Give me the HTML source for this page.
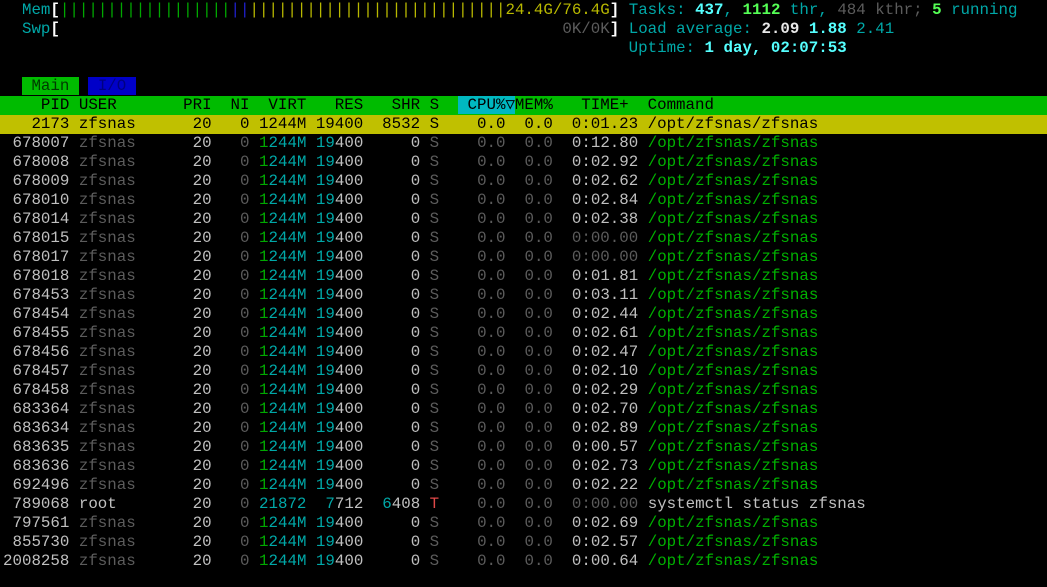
<!DOCTYPE html>
<html><head><meta charset="utf-8"><style>
html,body{margin:0;padding:0;background:#000;width:1047px;height:587px;overflow:hidden}
#t{position:absolute;left:0;top:1px;width:1047px;font-family:"Liberation Mono","DejaVu Sans Mono",monospace;font-size:15.8px;line-height:19px;color:#c0c0c0}
.l{height:19px;padding-left:3px;white-space:pre}
.w{color:#c0c0c0}.d{color:#5c5c5c}.c{color:#00a8a8}.g{color:#00a800}.gr{color:#00b000}
.y{color:#b8b800}.b{color:#2020d0}.r{color:#e04848}
.bc{color:#55ffff;font-weight:bold}.bg{color:#55ff55;font-weight:bold}.bw{color:#e8e8e8;font-weight:bold}.bb{color:#fff;font-weight:bold}
.hdr{background:#00bb00;color:#000}
.sel{background:#c0c000;color:#000}
.cy{background:#00b8c0}
.tri{display:inline-block;width:1ch;text-align:center}
.tm{background:#00bb00;color:#003a00}.ti{background:#0000c8;color:#000080}
</style></head><body><div id="t">
<div class="l">  <span class="c">Mem</span><span class="bb">[</span><span class="g">||||||||||||||||||</span><span class="b">||</span><span class="y">|||||||||||||||||||||||||||24.4G/76.4G</span><span class="bb">]</span> <span class="c">Tasks: </span><span class="bc">437</span><span class="c">, </span><span class="bg">1112</span><span class="c"> thr, </span><span class="d">484 kthr; </span><span class="bg">5</span><span class="c"> running</span></div>
<div class="l">  <span class="c">Swp</span><span class="bb">[</span>                                                     <span class="d">0K/0K</span><span class="bb">]</span> <span class="c">Load average: </span><span class="bw">2.09 </span><span class="bc">1.88 </span><span class="c">2.41</span></div>
<div class="l">                                                                  <span class="c">Uptime: </span><span class="bc">1 day, 02:07:53</span></div>
<div class="l"> </div>
<div class="l">  <span class="tm"> Main </span> <span class="ti"> I/O </span></div>
<div class="l hdr">    PID USER       PRI  NI  VIRT   RES   SHR S  <span class="cy"> CPU%<span class="tri">▽</span></span>MEM%   TIME+  Command</div>
<div class="l sel">   2173 zfsnas      20   0 1244M 19400  8532 S    0.0  0.0  0:01.23 /opt/zfsnas/zfsnas</div>
<div class="l"> 678007 <span class="d">zfsnas</span>     <span class="w"> 20</span> <span class="d">  0</span> <span class="g">1</span><span class="c">244M</span> <span class="c">19</span>400     0 <span class="d">S    0.0  0.0</span>  0:12.80 <span class="gr">/opt/zfsnas/zfsnas</span></div>
<div class="l"> 678008 <span class="d">zfsnas</span>     <span class="w"> 20</span> <span class="d">  0</span> <span class="g">1</span><span class="c">244M</span> <span class="c">19</span>400     0 <span class="d">S    0.0  0.0</span>  0:02.92 <span class="gr">/opt/zfsnas/zfsnas</span></div>
<div class="l"> 678009 <span class="d">zfsnas</span>     <span class="w"> 20</span> <span class="d">  0</span> <span class="g">1</span><span class="c">244M</span> <span class="c">19</span>400     0 <span class="d">S    0.0  0.0</span>  0:02.62 <span class="gr">/opt/zfsnas/zfsnas</span></div>
<div class="l"> 678010 <span class="d">zfsnas</span>     <span class="w"> 20</span> <span class="d">  0</span> <span class="g">1</span><span class="c">244M</span> <span class="c">19</span>400     0 <span class="d">S    0.0  0.0</span>  0:02.84 <span class="gr">/opt/zfsnas/zfsnas</span></div>
<div class="l"> 678014 <span class="d">zfsnas</span>     <span class="w"> 20</span> <span class="d">  0</span> <span class="g">1</span><span class="c">244M</span> <span class="c">19</span>400     0 <span class="d">S    0.0  0.0</span>  0:02.38 <span class="gr">/opt/zfsnas/zfsnas</span></div>
<div class="l"> 678015 <span class="d">zfsnas</span>     <span class="w"> 20</span> <span class="d">  0</span> <span class="g">1</span><span class="c">244M</span> <span class="c">19</span>400     0 <span class="d">S    0.0  0.0  0:00.00</span> <span class="gr">/opt/zfsnas/zfsnas</span></div>
<div class="l"> 678017 <span class="d">zfsnas</span>     <span class="w"> 20</span> <span class="d">  0</span> <span class="g">1</span><span class="c">244M</span> <span class="c">19</span>400     0 <span class="d">S    0.0  0.0  0:00.00</span> <span class="gr">/opt/zfsnas/zfsnas</span></div>
<div class="l"> 678018 <span class="d">zfsnas</span>     <span class="w"> 20</span> <span class="d">  0</span> <span class="g">1</span><span class="c">244M</span> <span class="c">19</span>400     0 <span class="d">S    0.0  0.0</span>  0:01.81 <span class="gr">/opt/zfsnas/zfsnas</span></div>
<div class="l"> 678453 <span class="d">zfsnas</span>     <span class="w"> 20</span> <span class="d">  0</span> <span class="g">1</span><span class="c">244M</span> <span class="c">19</span>400     0 <span class="d">S    0.0  0.0</span>  0:03.11 <span class="gr">/opt/zfsnas/zfsnas</span></div>
<div class="l"> 678454 <span class="d">zfsnas</span>     <span class="w"> 20</span> <span class="d">  0</span> <span class="g">1</span><span class="c">244M</span> <span class="c">19</span>400     0 <span class="d">S    0.0  0.0</span>  0:02.44 <span class="gr">/opt/zfsnas/zfsnas</span></div>
<div class="l"> 678455 <span class="d">zfsnas</span>     <span class="w"> 20</span> <span class="d">  0</span> <span class="g">1</span><span class="c">244M</span> <span class="c">19</span>400     0 <span class="d">S    0.0  0.0</span>  0:02.61 <span class="gr">/opt/zfsnas/zfsnas</span></div>
<div class="l"> 678456 <span class="d">zfsnas</span>     <span class="w"> 20</span> <span class="d">  0</span> <span class="g">1</span><span class="c">244M</span> <span class="c">19</span>400     0 <span class="d">S    0.0  0.0</span>  0:02.47 <span class="gr">/opt/zfsnas/zfsnas</span></div>
<div class="l"> 678457 <span class="d">zfsnas</span>     <span class="w"> 20</span> <span class="d">  0</span> <span class="g">1</span><span class="c">244M</span> <span class="c">19</span>400     0 <span class="d">S    0.0  0.0</span>  0:02.10 <span class="gr">/opt/zfsnas/zfsnas</span></div>
<div class="l"> 678458 <span class="d">zfsnas</span>     <span class="w"> 20</span> <span class="d">  0</span> <span class="g">1</span><span class="c">244M</span> <span class="c">19</span>400     0 <span class="d">S    0.0  0.0</span>  0:02.29 <span class="gr">/opt/zfsnas/zfsnas</span></div>
<div class="l"> 683364 <span class="d">zfsnas</span>     <span class="w"> 20</span> <span class="d">  0</span> <span class="g">1</span><span class="c">244M</span> <span class="c">19</span>400     0 <span class="d">S    0.0  0.0</span>  0:02.70 <span class="gr">/opt/zfsnas/zfsnas</span></div>
<div class="l"> 683634 <span class="d">zfsnas</span>     <span class="w"> 20</span> <span class="d">  0</span> <span class="g">1</span><span class="c">244M</span> <span class="c">19</span>400     0 <span class="d">S    0.0  0.0</span>  0:02.89 <span class="gr">/opt/zfsnas/zfsnas</span></div>
<div class="l"> 683635 <span class="d">zfsnas</span>     <span class="w"> 20</span> <span class="d">  0</span> <span class="g">1</span><span class="c">244M</span> <span class="c">19</span>400     0 <span class="d">S    0.0  0.0</span>  0:00.57 <span class="gr">/opt/zfsnas/zfsnas</span></div>
<div class="l"> 683636 <span class="d">zfsnas</span>     <span class="w"> 20</span> <span class="d">  0</span> <span class="g">1</span><span class="c">244M</span> <span class="c">19</span>400     0 <span class="d">S    0.0  0.0</span>  0:02.73 <span class="gr">/opt/zfsnas/zfsnas</span></div>
<div class="l"> 692496 <span class="d">zfsnas</span>     <span class="w"> 20</span> <span class="d">  0</span> <span class="g">1</span><span class="c">244M</span> <span class="c">19</span>400     0 <span class="d">S    0.0  0.0</span>  0:02.22 <span class="gr">/opt/zfsnas/zfsnas</span></div>
<div class="l"> 789068 root       <span class="w"> 20</span> <span class="d">  0</span> <span class="c">21872</span>  <span class="c">7</span>712  <span class="c">6</span>408 <span class="r">T</span><span class="d">    0.0  0.0  0:00.00</span> systemctl status zfsnas</div>
<div class="l"> 797561 <span class="d">zfsnas</span>     <span class="w"> 20</span> <span class="d">  0</span> <span class="g">1</span><span class="c">244M</span> <span class="c">19</span>400     0 <span class="d">S    0.0  0.0</span>  0:02.69 <span class="gr">/opt/zfsnas/zfsnas</span></div>
<div class="l"> 855730 <span class="d">zfsnas</span>     <span class="w"> 20</span> <span class="d">  0</span> <span class="g">1</span><span class="c">244M</span> <span class="c">19</span>400     0 <span class="d">S    0.0  0.0</span>  0:02.57 <span class="gr">/opt/zfsnas/zfsnas</span></div>
<div class="l">2008258 <span class="d">zfsnas</span>     <span class="w"> 20</span> <span class="d">  0</span> <span class="g">1</span><span class="c">244M</span> <span class="c">19</span>400     0 <span class="d">S    0.0  0.0</span>  0:00.64 <span class="gr">/opt/zfsnas/zfsnas</span></div>
</div></body></html>
